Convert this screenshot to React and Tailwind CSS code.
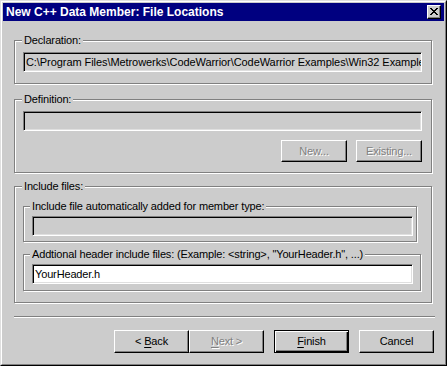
const raised =
  'border border-t-white border-l-white border-r-black border-b-black shadow-[inset_-1px_-1px_0_#808080]';
const sunken =
  'border border-t-[#808080] border-l-[#808080] border-r-white border-b-white shadow-[inset_1px_1px_0_#000,inset_-1px_-1px_0_#dfdfdf]';
const disabledText = 'text-[#808080] [text-shadow:1px_1px_0_#fff]';

function CloseGlyph() {
  return (
    <svg width="8" height="7" viewBox="0 0 8 7" shapeRendering="crispEdges" aria-hidden>
      <path
        fill="#000"
        d="M0 0h2v1H0zM6 0h2v1H6zM1 1h2v1H1zM5 1h2v1H5zM2 2h4v1H2zM3 3h2v1H3zM2 4h4v1H2zM1 5h2v1H1zM5 5h2v1H5zM0 6h2v1H0zM6 6h2v1H6z"
      />
    </svg>
  );
}

function TitleBar() {
  return (
    <div className="flex h-[18px] shrink-0 items-center justify-between bg-[#000080] pl-[3px] pr-[3px]">
      <span className="text-[12px] font-bold leading-[14px] tracking-normal text-white">
        New C++ Data Member: File Locations
      </span>
      <div className={`flex h-[14px] w-[14px] items-center justify-center bg-[#cccccc] pb-px ${raised}`}>
        <CloseGlyph />
      </div>
    </div>
  );
}

function GroupBox({ label, className, labelLeft = 'left-[7px]', children }) {
  return (
    <div
      className={`relative shrink-0 border border-[#808080] shadow-[inset_1px_1px_0_#fff,1px_1px_0_#fff] ${className}`}
    >
      <span className={`absolute -top-[7px] ${labelLeft} bg-[#cccccc] px-[2px] leading-[13px] whitespace-nowrap`}>
        {label}
      </span>
      {children}
    </div>
  );
}

function Field({ value, white, className }) {
  return (
    <div
      className={`flex h-[20px] items-center overflow-hidden whitespace-nowrap pl-[2px] leading-[13px] ${sunken} ${
        white ? 'bg-white' : 'bg-[#cccccc]'
      } ${className}`}
    >
      {value}
    </div>
  );
}

function Button({ children, disabled, isDefault, className }) {
  const frame = isDefault
    ? 'border border-black shadow-[inset_1px_1px_0_#fff,inset_-1px_-1px_0_#000,inset_-2px_-2px_0_#808080]'
    : raised;
  return (
    <div
      className={`flex items-center justify-center leading-[13px] ${frame} ${
        disabled ? disabledText : 'text-black'
      } ${className}`}
    >
      {children}
    </div>
  );
}

export default function App() {
  return (
    <div className="h-[366px] w-[447px] border border-t-[#dfdfdf] border-l-[#dfdfdf] border-r-black border-b-black bg-[#cccccc] font-['Liberation_Sans',Arial,sans-serif] text-[11px] tracking-[-0.15px] text-black">
      <div className="flex h-full flex-col border border-t-white border-l-white border-r-[#808080] border-b-[#808080] p-px">
        <TitleBar />
        <div className="flex flex-1 flex-col pl-[11px] pr-[9px] pt-[19px]">
          <GroupBox label="Declaration:" className="h-[44px] w-[418px] pl-[8px] pt-[11px]">
            <Field
              className="w-[399px] tracking-[-0.07px]"
              value="C:\Program Files\Metrowerks\CodeWarrior\CodeWarrior Examples\Win32 Examples"
            />
          </GroupBox>

          <GroupBox label="Definition:" className="mt-[15px] h-[74px] w-[418px] pl-[8px] pt-[11px]">
            <Field className="w-[399px]" value="" />
            <div className="mt-[9px] flex w-[399px] justify-end gap-[9px]">
              <Button disabled className="h-[22px] w-[66px]">New...</Button>
              <Button disabled className="h-[22px] w-[66px]">Existing...</Button>
            </div>
          </GroupBox>

          <GroupBox label="Include files:" className="mt-[13px] h-[117px] w-[418px] pl-[8px] pt-[19px]">
            <GroupBox
              label="Include file automatically added for member type:"
              labelLeft="left-[6px]"
              className="h-[36px] w-[394px] pl-[8px] pt-[9px]"
            >
              <Field className="w-[381px]" value="" />
            </GroupBox>
            <GroupBox
              label={'Addtional header include files: (Example: <string>, "YourHeader.h", ...)'}
              labelLeft="left-[6px]"
              className="mt-[12px] h-[37px] w-[398px] pl-[8px] pt-[9px]"
            >
              <Field white className="w-[381px]" value="YourHeader.h" />
            </GroupBox>
          </GroupBox>

          <div className="mt-[13px] h-[2px] w-full shrink-0 border-t border-t-[#808080] border-b border-b-white" />

          <div className="mt-[12px] mr-px flex justify-end">
            <Button className="h-[23px] w-[75px]">
              &lt;&nbsp;<span className="underline underline-offset-[2px]">B</span>ack
            </Button>
            <Button disabled className="h-[23px] w-[75px]">
              <span className="underline underline-offset-[2px]">N</span>ext&nbsp;&gt;
            </Button>
            <Button isDefault className="ml-[10px] h-[23px] w-[75px]">
              <span className="underline underline-offset-[2px]">F</span>inish
            </Button>
            <Button className="ml-[10px] h-[23px] w-[75px]">Cancel</Button>
          </div>
        </div>
      </div>
    </div>
  );
}
